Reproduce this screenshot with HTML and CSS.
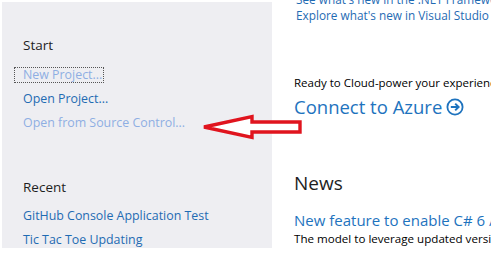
FILE: index.html
```html
<!DOCTYPE html>
<html>
<head>
<meta charset="utf-8">
<link rel="stylesheet" href="styles.css">
</head>
<body>
<div class="page">
  <div class="sidebar">
    <div class="heading start">Start</div>
    <div class="link muted"><span class="focus-box">New Project...</span></div>
    <div class="link">Open Project...</div>
    <div class="link muted">Open from Source Control...</div>
    <div class="heading recent">Recent</div>
    <div class="link">GitHub Console Application Test</div>
    <div class="link">Tic Tac Toe Updating</div>
  </div>
  <div class="main">
    <div class="news-links">
      <div class="nlink">See what's new in the .NET Framework</div>
      <div class="nlink">Explore what's new in Visual Studio Team Foundation Server</div>
    </div>
    <div class="cloud">Ready to Cloud-power your experience</div>
    <div class="azure">Connect to Azure <svg class="go" width="18" height="18" viewBox="0 0 18 18"><circle cx="9" cy="9" r="7.6" fill="none" stroke="#1e73be" stroke-width="1.8"/><path d="M4.8 9 H12.4 M9.2 5.6 L12.6 9 L9.2 12.4" fill="none" stroke="#1e73be" stroke-width="2"/></svg></div>
    <div class="news-title">News</div>
    <div class="news-item">New feature to enable C# 6 / VB 14</div>
    <div class="news-desc">The model to leverage updated versions of the compilers</div>
  </div>
  <svg class="arrow" width="110" height="30" viewBox="198 112 110 30">
    <path d="M204 127 L252 116.5 L252 122 L300 122 L300 132 L252 132 L252 137.5 Z" fill="#ffffff" stroke="#e0141e" stroke-width="3.4" stroke-linejoin="miter"/>
  </svg>
</div>
</body>
</html>
```
FILE: styles.css
```css
html, body {
  margin: 0;
  padding: 0;
  background: #ffffff;
  overflow: hidden;
}
.page {
  position: relative;
  display: flex;
  width: 491px;
  height: 254px;
  overflow: hidden;
  font-family: "Open Sans", "Noto Sans", sans-serif;
  white-space: nowrap;
}
.sidebar {
  flex: 0 0 270px;
  margin: 2px 0 0 2px;
  height: 246px;
  background: #eeeef2;
  padding: 33px 0 0 21px;
  box-sizing: border-box;
}
.heading {
  font-size: 13.5px;
  line-height: 20px;
  color: #1e1e1e;
}
.start { margin-bottom: 8px; }
.recent { margin-top: 42px; margin-bottom: 7px; }
.link {
  font-size: 12.4px;
  line-height: 24px;
  color: #1f6bb3;
}
.link.muted { color: #8eaee3; }
.focus-box {
  display: inline-block;
  line-height: 14px;
  margin-left: -9px;
  padding: 0 1px 0 8px;
  border: 1px dotted #555;
}
.main {
  flex: 1;
  padding-left: 22px;
  min-width: 0;
}
.news-links {
  margin-top: -9px;
  padding-left: 2px;
}
.nlink {
  font-size: 11.8px;
  line-height: 16px;
  color: #1f6bb3;
}
.cloud {
  margin-top: 52px;
  font-size: 11.5px;
  line-height: 16px;
  color: #000;
}
.azure {
  margin-top: 3px;
  font-size: 18.5px;
  line-height: 26px;
  color: #1e73be;
  display: flex;
  align-items: center;
  gap: 4px;
}
.go { flex: 0 0 auto; }
.news-title {
  margin-top: 50px;
  font-size: 19px;
  line-height: 26px;
  color: #1e1e1e;
}
.news-item {
  margin-top: 14px;
  font-size: 15px;
  line-height: 20px;
  color: #1e73be;
}
.news-desc {
  margin-top: 1px;
  font-size: 11.6px;
  line-height: 16px;
  color: #000;
}
.arrow {
  position: absolute;
  left: 198px;
  top: 112px;
}
```
